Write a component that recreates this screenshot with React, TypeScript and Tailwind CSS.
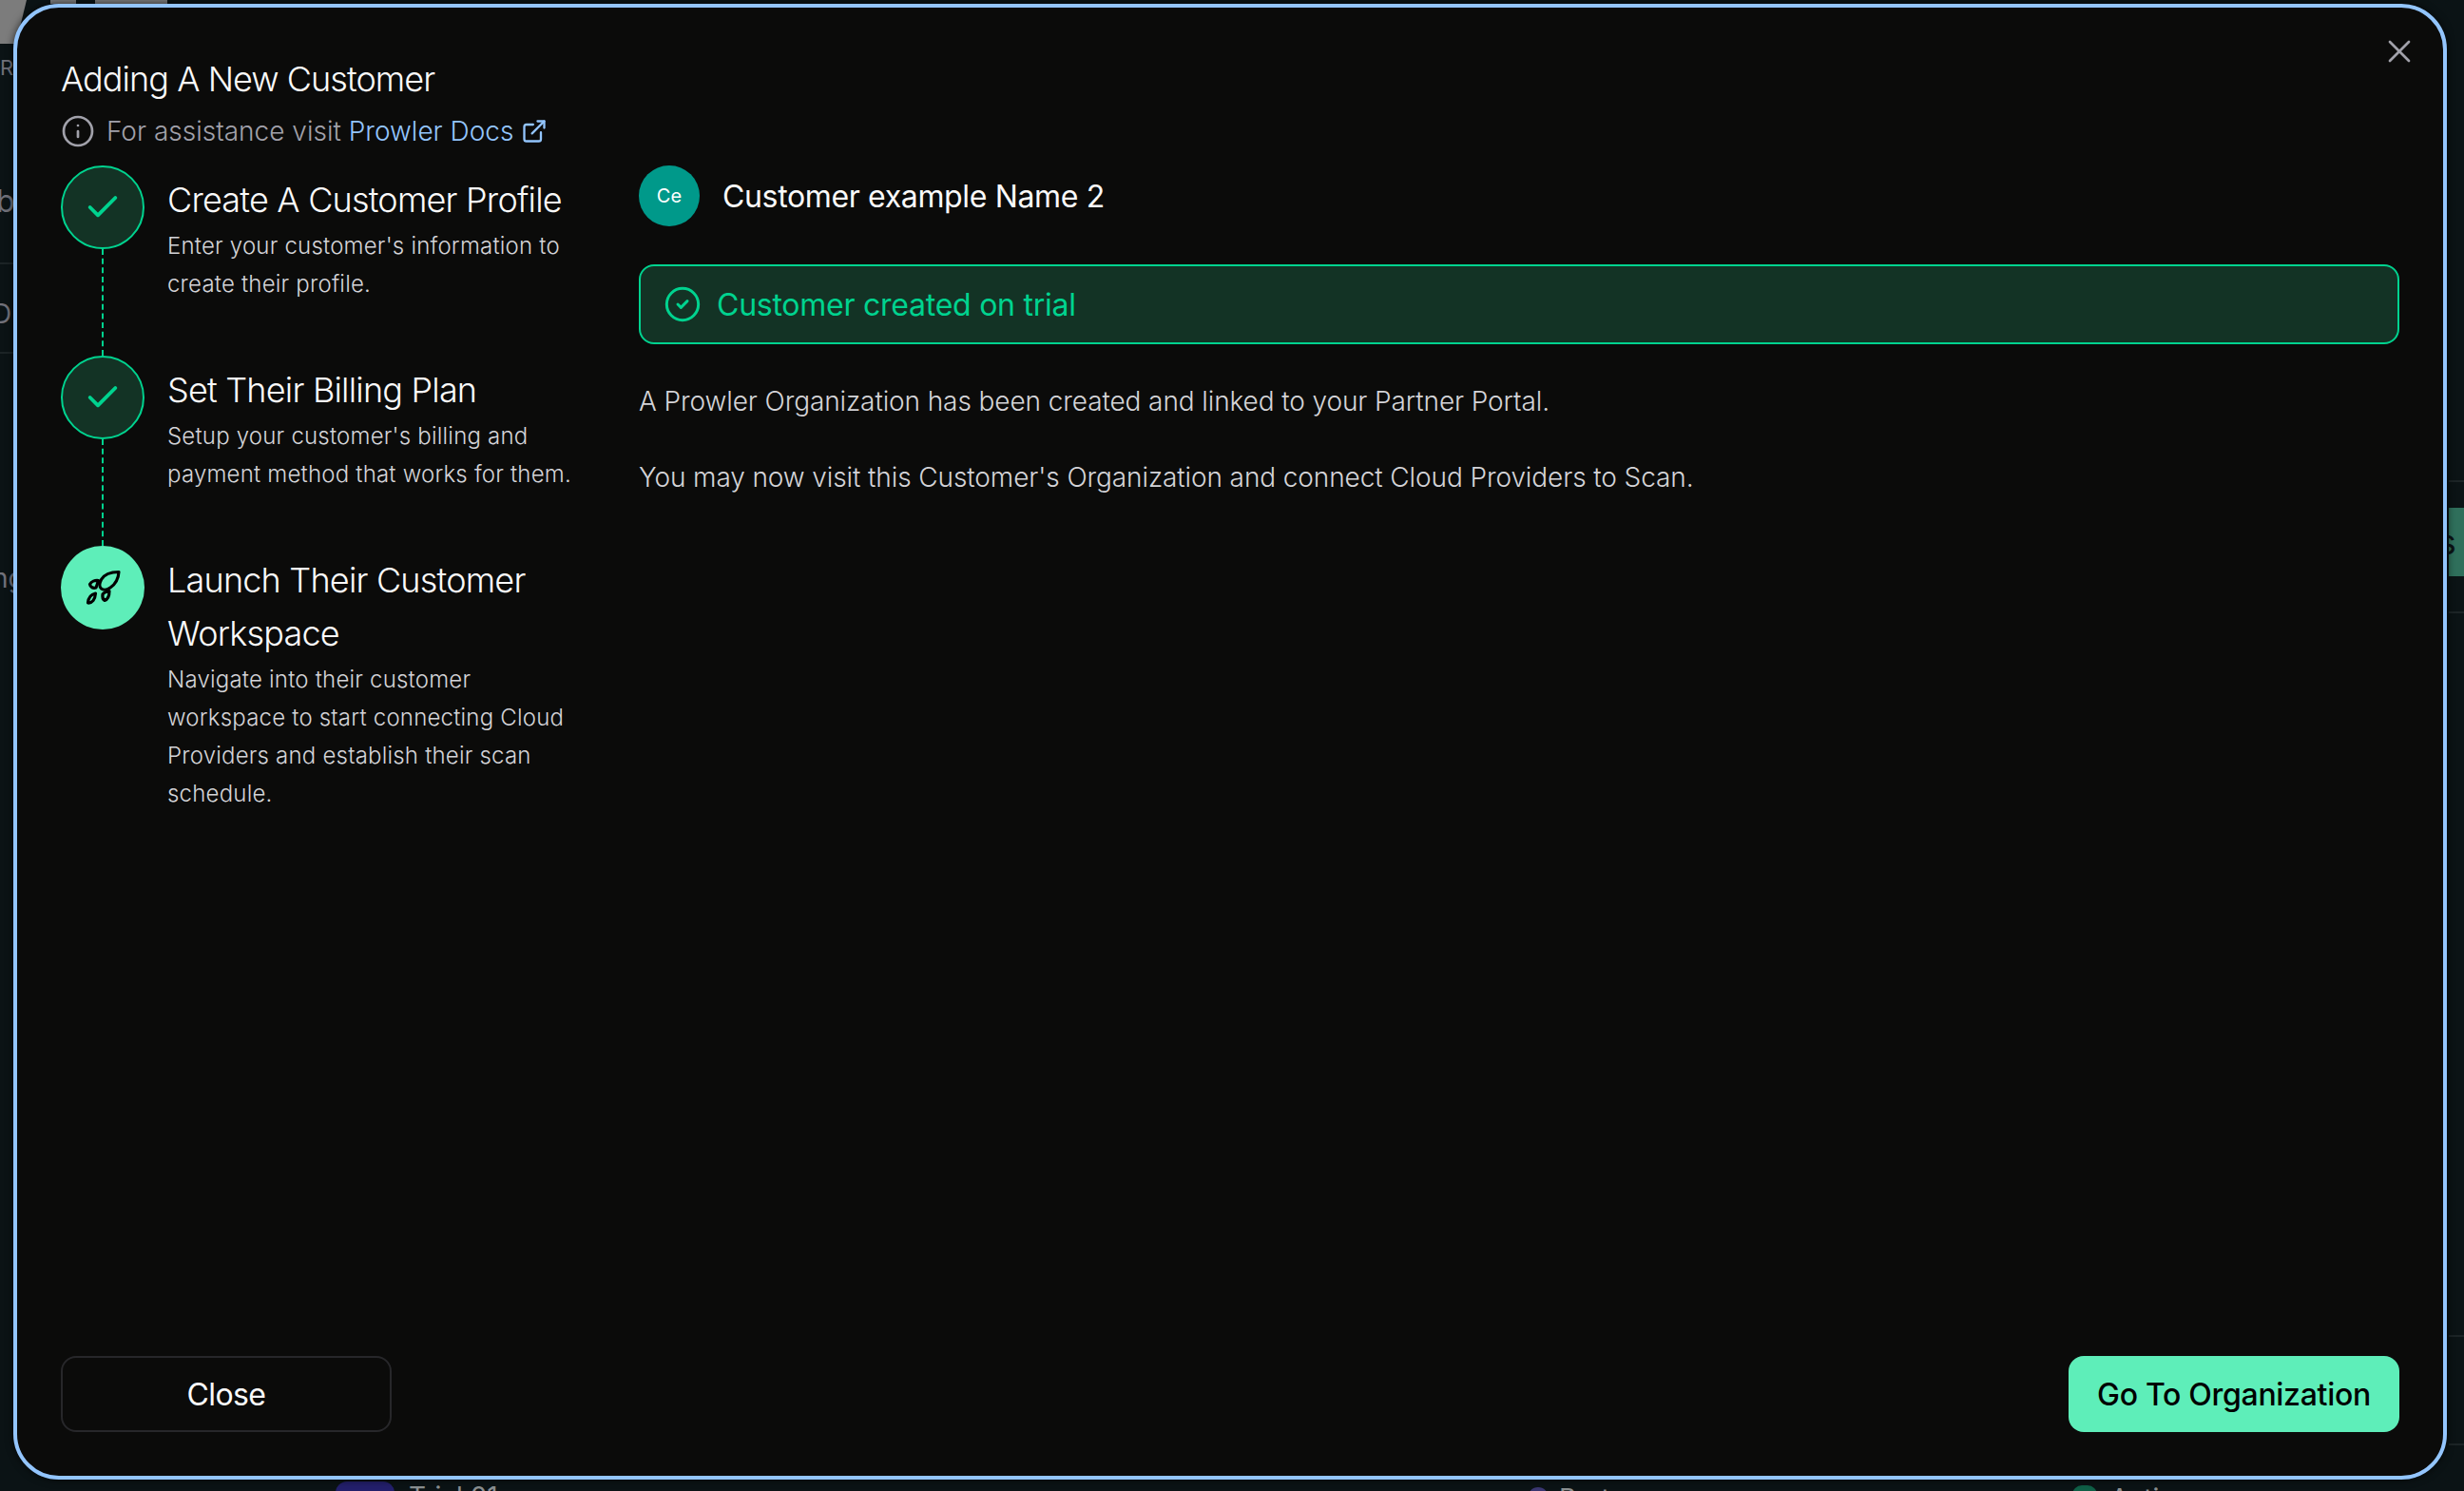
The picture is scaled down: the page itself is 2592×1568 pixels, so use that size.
import { Check, CircleCheck, ExternalLink, Info, X } from "lucide-react";

const font = { fontFamily: '"Inter", "Liberation Sans", sans-serif' };

function RocketIcon() {
  return (
    <svg width="60" height="60" viewBox="0 0 60 60" fill="none" stroke="#000" strokeWidth="3.2" strokeLinejoin="round" strokeLinecap="round">
      <path d="M47 13.5C39 13.5 32 15.5 28.5 21.5C26.5 25.5 26.5 29.5 28.5 31C30.5 32.5 34.5 32.5 38 30C44 26 46.5 21 47 13.5Z" />
      <path d="M25.5 22.5C22 22 18 23.5 16.5 26.5C17 29.5 20 31 23 30C24 27.5 24.8 25 25.5 22.5Z" />
      <path d="M37 33.5C34 34.5 31 35 30 37C29.5 40 30.5 42.5 32 43.5C35 42.5 37 39 37 33.5Z" />
      <path d="M22.5 36C18 37 15 40 14.5 46C19 46.5 22 42.5 22.5 36Z" />
    </svg>
  );
}

function Step({
  title,
  lines,
  state,
  last,
}: {
  title: string;
  lines: string;
  state: "done" | "active";
  last?: boolean;
}) {
  return (
    <div className={last ? "flex gap-[24px]" : "flex gap-[24px] h-[200px]"}>
      <div className="flex flex-col items-center w-[88px] shrink-0">
        {state === "done" ? (
          <div className="flex items-center justify-center w-[88px] h-[88px] shrink-0 rounded-full border-2 border-[#00d38f] bg-[#133325] text-[#00d38f]">
            <Check size={40} strokeWidth={2.3} />
          </div>
        ) : (
          <div className="flex items-center justify-center w-[88px] h-[88px] shrink-0 rounded-full bg-[#5eeeb9]">
            <RocketIcon />
          </div>
        )}
        {!last && <div className="flex-1 border-l-2 border-dashed border-[#00d38f]" />}
      </div>
      <div className="w-[432px] pt-[8px]">
        <h3 className="text-[36px] leading-[56px] font-[340] tracking-[-0.8px] text-[#fafafa]">{title}</h3>
        <p className="pt-[1px] text-[24px] leading-[40px] font-[350] tracking-[0.2px] text-[#d4d4d8]">{lines}</p>
      </div>
    </div>
  );
}

export default function App() {
  return (
    <div className="relative w-[2592px] h-[1568px] overflow-hidden bg-[#0b1315] antialiased" style={font}>
      {/* page behind the dialog: only its edges show */}
      <div className="absolute left-0 top-0 w-[28px] h-[46px] bg-[#7c7c7c] [clip-path:polygon(0_0,100%_0,60%_100%,0_100%)]" />
      <div className="absolute left-[53px] top-0 w-[27px] h-[4px] bg-[#7c7c7c]" />
      <div className="absolute left-[100px] top-0 w-[76px] h-[4px] bg-[#7c7c7c]" />
      <div className="absolute left-0 top-[58px] text-[22px] leading-[26px] text-[#71717a]">R</div>
      <div className="absolute left-[-4px] top-[192px] text-[32px] leading-[40px] text-[#71717a]">b</div>
      <div className="absolute left-[-8px] top-[312px] text-[28px] leading-[36px] text-[#71717a]">DI</div>
      <div className="absolute left-[-8px] top-[590px] text-[28px] leading-[36px] text-[#71717a]">ng</div>
      <div className="absolute left-0 top-[276px] w-[14px] h-[2px] bg-[#1c2426]" />
      <div className="absolute left-0 top-[370px] w-[14px] h-[2px] bg-[#1c2426]" />
      <div className="absolute left-[2576px] top-[534px] w-[16px] h-[72px] bg-[#2f6f5b]" />
      <div className="absolute left-[2556px] top-[550px] text-[36px] leading-[40px] text-[#0b1315]">is</div>
      <div className="absolute left-[2576px] top-[505px] w-[16px] h-[2px] bg-[#1c2426]" />
      <div className="absolute left-[2576px] top-[643px] w-[16px] h-[2px] bg-[#1c2426]" />
      <div className="absolute left-[2576px] top-[1404px] w-[16px] h-[2px] bg-[#1c2426]" />
      <div className="absolute left-[2576px] top-[1518px] w-[16px] h-[2px] bg-[#1c2426]" />
      <div className="absolute left-[353px] top-[1558px] w-[62px] h-[40px] rounded-[12px] bg-[#231f6b]" />
      <div className="absolute left-[430px] top-[1556px] text-[28px] leading-[36px] text-[#8a8f90]">Trial 01</div>
      <div className="absolute left-[1607px] top-[1564px] w-[22px] h-[30px] rounded-full bg-[#3a3670]" />
      <div className="absolute left-[1640px] top-[1558px] text-[28px] leading-[36px] text-[#8a8f90]">Partner</div>
      <div className="absolute left-[2180px] top-[1562px] w-[26px] h-[30px] rounded-[10px] bg-[#0f5f46]" />
      <div className="absolute left-[2220px] top-[1558px] text-[28px] leading-[36px] text-[#8a8f90]">Active</div>

      {/* dialog */}
      <div className="relative z-10 ml-[14px] mt-[4px] flex flex-col w-[2560px] h-[1552px] rounded-[48px] border-4 border-[#93c5fd] bg-[#0b0b0a] pl-[46px] pr-[46px] pt-[47px] pb-[46px] text-white shadow-[0_0_8px_rgba(0,0,0,0.7)]">
        <button className="absolute right-[26px] top-[26px] text-[#a1a1aa]">
          <X size={40} strokeWidth={1.6} />
        </button>

        <h2 className="text-[36px] leading-[56px] font-[340] tracking-[-0.95px] text-[#fafafa]">Adding A New Customer</h2>
        <div className="flex items-center mt-[7px] h-[40px] text-[28px] leading-[40px] font-[350] text-[#a1a1aa]">
          <Info size={36} strokeWidth={1.8} className="text-[#a1a1aa] mr-[12px]" />
          <span>For assistance visit</span>
          <span className="ml-[8px] text-[#93c5fd]">Prowler Docs</span>
          <ExternalLink size={28} strokeWidth={2} className="ml-[8px] text-[#93c5fd]" />
        </div>

        <div className="flex flex-1 mt-[16px]">
          <div className="w-[608px] shrink-0">
            <Step
              title="Create A Customer Profile"
              lines="Enter your customer's information to create their profile."
              state="done"
            />
            <Step
              title="Set Their Billing Plan"
              lines="Setup your customer's billing and payment method that works for them."
              state="done"
            />
            <Step
              title="Launch Their Customer Workspace"
              lines="Navigate into their customer workspace to start connecting Cloud Providers and establish their scan schedule."
              state="active"
              last
            />
          </div>

          <div className="flex-1 min-w-0">
            <div className="flex items-center gap-[24px]">
              <div className="flex items-center justify-center w-[64px] h-[64px] rounded-full bg-[#00998a] text-[20px] text-white">Ce</div>
              <div className="pt-[2px] text-[32px] leading-[48px] tracking-[-0.35px] text-[#fafafa]">Customer example Name 2</div>
            </div>
            <div className="flex items-center gap-[16px] mt-[40px] h-[84px] rounded-[16px] border-2 border-[#00d38f] bg-[#133325] px-[24px] text-[32px] tracking-[-0.25px] text-[#00d38f]">
              <CircleCheck size={40} strokeWidth={1.8} />
              <span className="pt-[2px]">Customer created on trial</span>
            </div>
            <div className="mt-[40px] text-[28px] leading-[40px] font-[350] tracking-[-0.1px] text-[#d4d4d8]">
              <p>A Prowler Organization has been created and linked to your Partner Portal.</p>
              <p className="mt-[40px]">You may now visit this Customer's Organization and connect Cloud Providers to Scan.</p>
            </div>
          </div>
        </div>

        <div className="flex items-center justify-between">
          <button className="w-[348px] h-[80px] pt-[2px] rounded-[16px] border-2 border-[#27272a] text-[32px] tracking-[-0.6px] text-[#fafafa]">Close</button>
          <button className="w-[348px] h-[80px] pt-[2px] rounded-[16px] bg-[#5eeeb9] text-[32px] font-medium tracking-[-0.3px] text-black">Go To Organization</button>
        </div>
      </div>
    </div>
  );
}
